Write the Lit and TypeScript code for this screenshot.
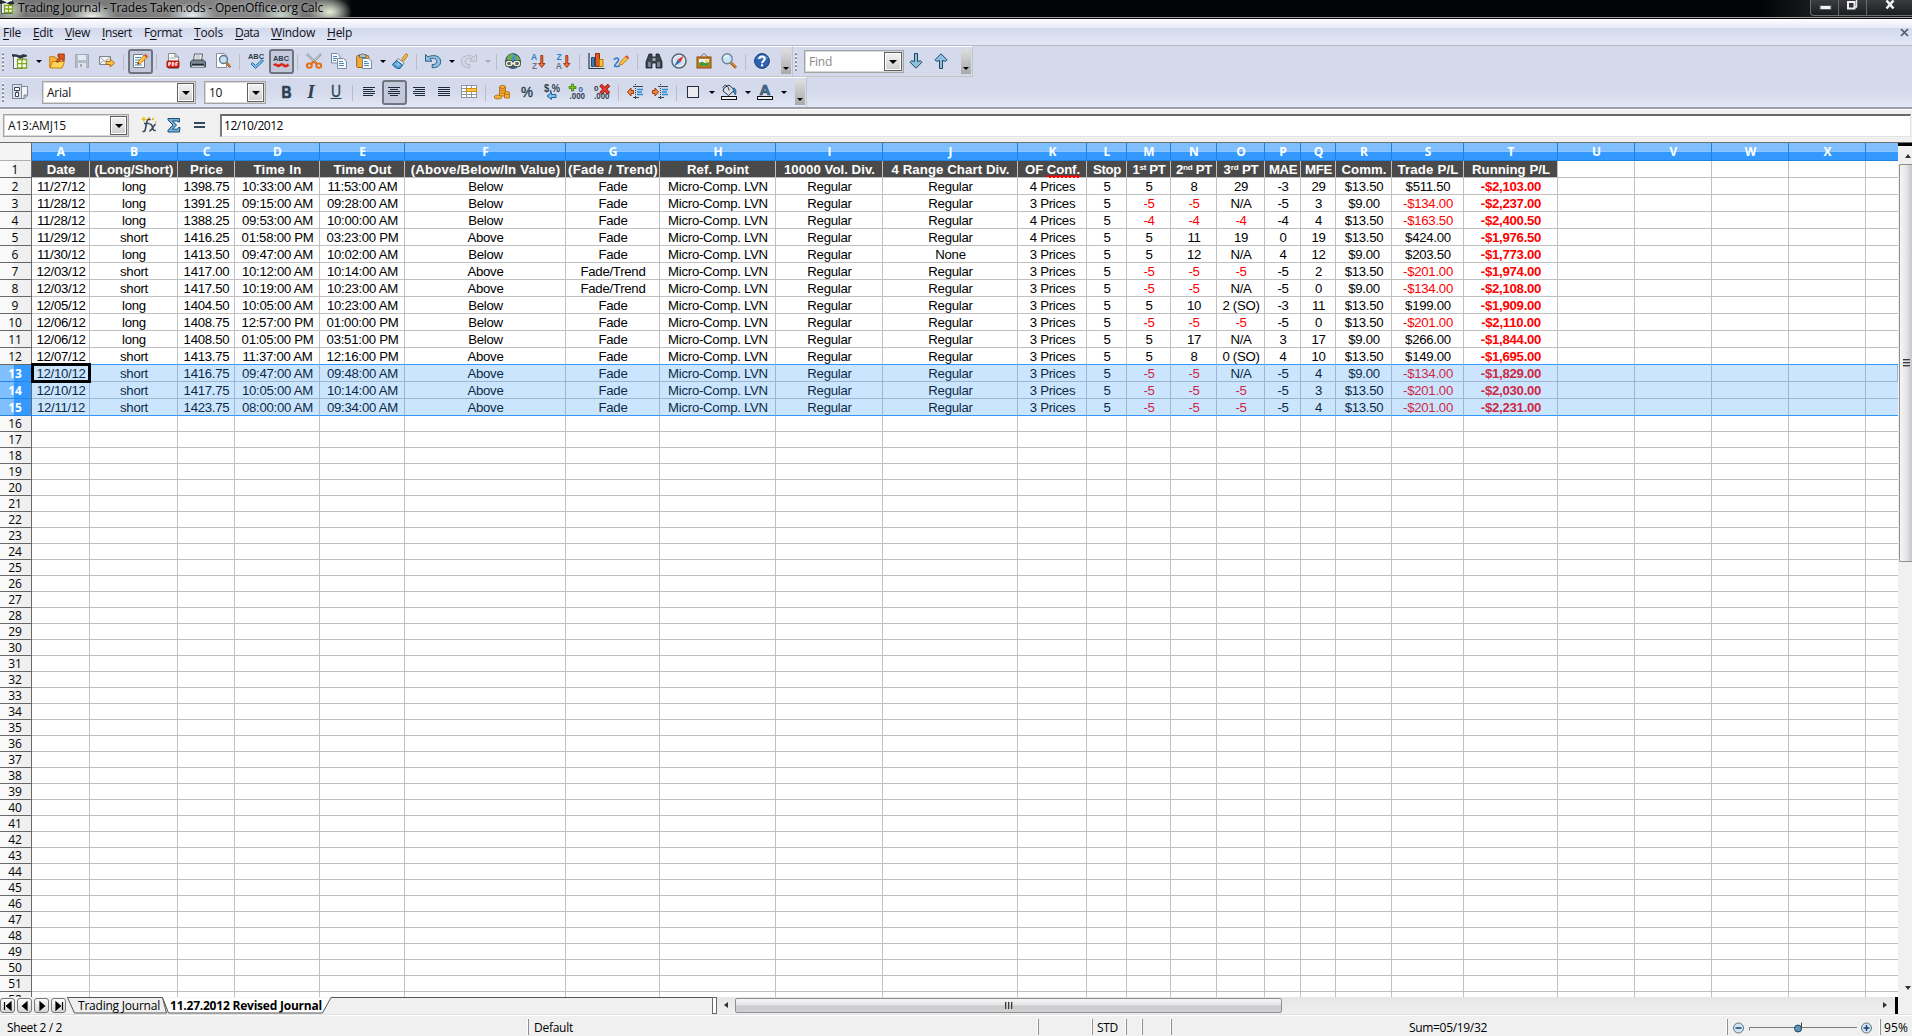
import { LitElement, html, css, svg, nothing } from "lit";
import { customElement, property } from "lit/decorators.js";

/* Stretches or tightens its text to a given width through letter spacing. */
@customElement("fit-text")
class FitText extends LitElement {
  @property({ type: Number }) w = 0;
  static styles = css`
    :host { display: inline-block; white-space: pre; }
  `;
  firstUpdated() {
    const n = (this.textContent ?? "").length;
    const nat = this.getBoundingClientRect().width;
    if (n && this.w) this.style.letterSpacing = ((this.w - nat) / n).toFixed(3) + "px";
  }
  render() {
    return html`<slot></slot>`;
  }
}

const NAVY = "#33495c";
const lines = (rows: number[][]) =>
  rows.map(([x, y, w]) => svg`<rect x=${x} y=${y} width=${w} height="1" fill="#1d2b36"/>`);

const ICONS: Record<string, unknown> = {
  new: svg`<path d="M1.500 2.500h9v13h-9z" fill="#f4f6f2" stroke="#5c6b78"/><path d="M0 1l5 .5 3 1.500 3-2 4 1v1.500l-4 1-3 1.500-3-2-5-.5z" fill="#2c3a46"/><path d="M5.500 6.500h9v8.500h-9z" fill="#fff" stroke="#7fa818" stroke-width="1.300"/><path d="M5.500 10.700h9M10 6.500v8.500" stroke="#7fa818" stroke-width="1.300"/>`,
  open: svg`<path d="M.7 14.500V3.700h5l1 1.500h3v9z" fill="#f5b63a" stroke="#c47d08"/><path d="M1 15l2.500-6.500h12L13 15z" fill="#ffd35c" stroke="#c98208"/><path d="M7 8.500l4-4.500-2-.2V1h6.300v6.300h-2.300V5.500L9 9.500z" fill="#e0561c" stroke="#8e2b06" stroke-width=".8"/>`,
  save: svg`<path d="M1.500 1.500h13v13h-13z" fill="#b4bcc8" stroke="#a3aab7"/><path d="M4 2h8v5H4z" fill="#e4e8f0"/><path d="M4 10h8v5H4z" fill="#dde1ea"/><path d="M6 11h2v3H6z" fill="#a3aab7"/>`,
  mail: svg`<path d="M.5 3.500h11v8H.5z" fill="#f3f4f6" stroke="#7f8790"/><path d="M.5 3.500l5.500 5 5.500-5M.5 11.500l4-4.300M11.500 11.500l-4-4.300" fill="none" stroke="#8b939c" stroke-width=".8"/><path d="M7 8.500h4.200V6l4.300 4-4.300 4v-2.500H7z" fill="#ffc24a" stroke="#b5650b"/>`,
  edit: svg`<path d="M1.500 1.500h9l2 2v11h-11z" fill="#fff" stroke="#6d7b86"/><path d="M3 4.500h6M3 7h5M3 9.500h3M3 12h7" stroke="#3d88c4"/><path d="M5.500 11.500l1-3.300L13 1.500l2.400 2.300-6.700 6.700z" fill="#ffc637" stroke="#b46c12" stroke-width=".8"/><path d="M12 2.500l1.500-1.500L16 3.300 14.500 5z" fill="#e3483a"/><path d="M5.500 11.500l.6-2 1.300 1.300z" fill="#222"/>`,
  pdf: svg`<path d="M3.500.5h7L13.500 4v11.500h-10z" fill="#f7f7f7" stroke="#858d94"/><path d="M10 .5V4h3.500" fill="#ccc" stroke="#858d94"/><path d="M5 5h5" stroke="#aaa"/><rect x="2" y="8" width="12" height="6.500" rx=".8" fill="#dc2a1f" stroke="#a01009"/><path d="M3.800 13V9.500h1.500v1.700H3.800M7.300 9.500v3.200h.8l.8-.8V10l-.8-.5zM10.900 13V9.500h2M10.900 11.200h1.500" fill="none" stroke="#fff"/>`,
  print: svg`<path d="M3.500 7.500l1-6.500h8l-1 6.500z" fill="#fff" stroke="#555f69"/><path d="M5.500 3h5M5.300 5h5" stroke="#9aa"/><path d="M.5 9l2-2h11l2 2v5H.5z" fill="#7b8893" stroke="#34404a"/><path d="M2 11.500h12" stroke="#202a33" stroke-width="1.500"/><path d="M2 13.500h12" stroke="#cfd6db"/>`,
  preview: svg`<path d="M1.500.5h8l2 2v12h-10z" fill="#fdfdfd" stroke="#89919a"/><circle cx="8.500" cy="6.500" r="4" fill="#c3e0f5" stroke="#577083" stroke-width="1.300"/><path d="M11.500 9.800l3.800 4.500" stroke="#9d5510" stroke-width="2.400"/><path d="M11.500 9.800l3.500 4" stroke="#e59c4a"/>`,
  cut: svg`<path d="M1 1l9.500 9.500M15 1L5.500 10.500" stroke="#8a949d" stroke-width="2.400"/><path d="M1.500 1.300l8.500 8.800M14.500 1.300L6 9.800" stroke="#eef1f3" stroke-width=".8"/><g fill="none" stroke="#e2711a" stroke-width="2"><ellipse cx="3.300" cy="12.600" rx="2.500" ry="2.200"/><ellipse cx="12.700" cy="12.600" rx="2.500" ry="2.200"/><path d="M5 11l3-2.500 3 2.500"/></g>`,
  copy: svg`<g fill="#f6f9fb" stroke="#7a8b99"><path d="M.5.5h6l2.500 2.500v7H.5z"/><path d="M6.500 5.500h6L15.500 8v7.500h-9z"/></g><path d="M2 3.500h4M2 5.500h4M2 7.500h3M8 8.500h4M8 10.500h5M8 12.500h5" stroke="#4e8cb8"/>`,
  paste: svg`<rect x=".7" y="2.500" width="12" height="12" rx="1" fill="#eea93b" stroke="#a5650d"/><path d="M3.500 1.500h2l1-1.200 1 1.200h2.500v3H3.500z" fill="#b6bec6" stroke="#56616b" stroke-width=".8"/><path d="M6.500 5.500h6l3 2.500v7.500h-9z" fill="#f8fafc" stroke="#788a98"/><path d="M8 8.500h3.500M8 10.500h5M8 12.500h5" stroke="#4e8cb8"/>`,
  brush: svg`<path d="M9.500 6.500l4.500-6 2 1.700-4.500 6z" fill="#f7b93c" stroke="#a76a0d" stroke-width=".8"/><path d="M6 5.500l6 4.500-1.500 2.500L4 8z" fill="#e8eef2" stroke="#5c7485" stroke-width=".8"/><path d="M4.500 7.500l6 4.500-2.500 3.500c-3 .5-6-1.500-7.700-4z" fill="#4f9bd8" stroke="#1f5e94"/><path d="M3.500 10.500l3 2.500M5.500 9.500l2.500 3" stroke="#c8e4f8"/>`,
  undo: svg`<path d="M.5 1.500v6.700h6.500L4.800 6C8 4.600 11.800 5.500 11.800 8.600c0 2-1.600 3-4.600 3v3.200c5.500 0 8.500-2.500 8.500-6.300C15.700 3 8.600 1 2.900 4z" fill="#8fc1e6" stroke="#2c5c83"/>`,
  redo: svg`<g transform="matrix(-1 0 0 1 16 0)"><path d="M.5 1.500v6.700h6.500L4.800 6C8 4.600 11.800 5.500 11.800 8.600c0 2-1.600 3-4.600 3v3.200c5.500 0 8.500-2.500 8.500-6.300C15.700 3 8.600 1 2.900 4z" fill="#d2d7e3" stroke="#b0b6c5"/></g>`,
  link: svg`<circle cx="8" cy="8" r="7.300" fill="#4a8fc9" stroke="#27465f"/><path d="M2 5c1-2.500 3-4 6-4l1 2-3 2 1 2-4 1zM10 4l3-1 2 4-3 1z" fill="#74b13e"/><path d="M2 8h12v5l-3 2.500H5L2 13z" fill="#33454f" opacity=".45"/><g fill="none" stroke="#2e3b33" stroke-width="3"><rect x="1.500" y="8.500" width="5.500" height="4" rx="2"/><rect x="9" y="8.500" width="5.500" height="4" rx="2"/></g><g fill="none" stroke="#eef0d4" stroke-width="1.500"><rect x="1.500" y="8.500" width="5.500" height="4" rx="2"/><rect x="9" y="8.500" width="5.500" height="4" rx="2"/><path d="M5.500 10.500h5"/></g>`,
  chart: svg`<path d="M1 0v15.500h15.500" fill="none" stroke="#2a3a48" stroke-width="1.200"/><path d="M3.500 4.500h3v9h-3z" fill="#3a7fb8" stroke="#1b4d78"/><path d="M7.500.5h4v13h-4z" fill="#e25a1c" stroke="#8c2f08"/><path d="M11.500 6.500h3.500v7h-3.500z" fill="#fbc23a" stroke="#b17a0a"/>`,
  draw: svg`<path d="M1 7c1-3 5-2.500 4.500 0S1 12 1.500 13s3 .5 5 0" fill="none" stroke="#2f7ac8" stroke-width="1.600"/><path d="M6 12.500l1.300-3.300L13 3l2.300 2.200-5.800 6z" fill="#ffc637" stroke="#a96510" stroke-width=".8"/><path d="M12.300 3.700l1.500-1.500 2.200 2.300L14.600 6z" fill="#e3483a"/>`,
  find: svg`<path d="M3 1h3v3h4V1h3l3 8v6h-6v-5H6v5H0V9z" fill="#3a454f" stroke="#161d24" stroke-width=".8"/><path d="M2 9h3v5H2zM11 9h3v5h-3z" fill="#77848f"/><path d="M6.500 5h3v3h-3z" fill="#9aa6b0"/>`,
  compass: svg`<circle cx="8" cy="8" r="7" fill="#eaf2f9" stroke="#5b6a77" stroke-width="1.600"/><circle cx="8" cy="8" r="5" fill="#cfe2f2"/><path d="M13 2.500L9.300 9.300 6.700 6.700z" fill="#e32a1c"/><path d="M3 13.500l3.700-6.800 2.600 2.600z" fill="#2a6db8"/>`,
  gallery: svg`<path d="M4 4l4-3.500L12 4" fill="none" stroke="#777"/><rect x="1" y="4" width="14" height="11" fill="#ce7c24" stroke="#8a4808"/><rect x="3" y="6" width="10" height="7" fill="#e9f5fc"/><path d="M3 13v-3l3-1.500 3 1.500 4-1v4z" fill="#4d9a34"/><circle cx="10.500" cy="8" r="1.300" fill="#ffd023"/>`,
  zoom: svg`<circle cx="6.200" cy="5.800" r="5" fill="#cbe5f8" stroke="#6d8597" stroke-width="1.400"/><path d="M3.500 5c.5-2 2.500-2.500 3.500-2" stroke="#fff" stroke-width="1.200" fill="none"/><path d="M10 9.800l5 5" stroke="#a2570c" stroke-width="2.800"/><path d="M10.200 9.600l4.600 4.600" stroke="#f4b362"/>`,
  help: svg`<circle cx="8" cy="8" r="7.400" fill="#2d62b0" stroke="#173d78"/><path d="M2 6c1-4 10-6 12.500-.5-3 1.500-9 .5-12.500.500z" fill="#6a98d8" opacity=".6"/><path d="M5.300 6c0-3.400 5.400-3.400 5.400 0 0 2-2.700 2.200-2.700 4.200" fill="none" stroke="#fff" stroke-width="2"/><rect x="7" y="11.300" width="2.100" height="2.100" fill="#fff"/>`,
  down: svg`<path d="M6.500.5h3v8l3-.8 1.500 1.500-6 6-6-6 1.500-1.500 3 .8z" fill="#8fc0e2" stroke="#1f4460"/>`,
  up: svg`<path d="M6.500 15.500h3v-8l3 .8L14 6.800l-6-6-6 6 1.500 1.500 3-.8z" fill="#8fc0e2" stroke="#1f4460"/>`,
  styles: svg`<path d="M5.500 2.500h10v9l-3 3h-7" fill="#f3f4f7" stroke="#7d8894"/><path d="M15.500 11h-3.500v3.500" fill="#b9c1ca" stroke="#7d8894"/><rect x=".5" y=".5" width="9" height="14" fill="#dde1ea" stroke="#7d8894"/><path d="M2.500 3.500h5v3h-5zM5 6.500v2M3.500 8.500h3v4h-3z" fill="#fff" stroke="#33495c"/>`,
  left: svg`${lines([[2, 3, 12], [2, 5, 10], [2, 7, 12], [2, 9, 12], [2, 11, 10]])}`,
  center: svg`${lines([[2, 3, 12], [4, 5, 8], [2, 7, 12], [2, 9, 12], [4, 11, 8]])}`,
  right: svg`${lines([[2, 3, 12], [4, 5, 10], [2, 7, 12], [2, 9, 12], [4, 11, 10]])}`,
  justify: svg`${lines([[2, 3, 12], [2, 5, 12], [2, 7, 12], [2, 9, 12], [2, 11, 12]])}`,
  merge: svg`<rect x=".5" y="1.500" width="15" height="12" fill="#fff" stroke="#8c97a2"/><path d="M.5 4.500h15M.5 7.500h15M.5 10.500h15M5.500 1.500v12M10.500 1.500v12" stroke="#8c97a2"/><rect x="5.500" y="4.500" width="10" height="3" fill="#ffc94f" stroke="#d18a0a"/>`,
  coins: svg`<g fill="#f4b13c" stroke="#aa640a" stroke-width=".8"><ellipse cx="8.500" cy="3" rx="3" ry="1.700"/><path d="M5.500 3v9h6V3c-1 2-5 2-6 0z"/><path d="M10.500 9.500h5v4.500h-5z"/><ellipse cx="13" cy="9" rx="2.600" ry="1.500"/><ellipse cx="4" cy="13" rx="3.800" ry="2"/></g><path d="M6 6c1 1 4 1 5 0M6 8.500c1 1 4 1 5 0" stroke="#aa640a" fill="none" stroke-width=".8"/>`,
  dec: svg`<path d="M6.500 6.500H4V4L.5 8 4 12V9.500h2.500z" fill="#f08a4a" stroke="#9b3a0b"/><path d="M8.500 0v16" stroke="#333" stroke-dasharray="1 1"/><path d="M6 2.500h10M6 13.500h6" stroke="#33495c"/><path d="M10 5.500h6M10 8h5M10 10.500h6" stroke="#2d8bd0" stroke-width="1.400"/>`,
  inc: svg`<path d="M.5 6.500H3V4l3.500 4L3 12V9.500H.5z" fill="#f08a4a" stroke="#9b3a0b"/><path d="M8.500 0v16" stroke="#333" stroke-dasharray="1 1"/><path d="M6 2.500h10M6 13.500h6" stroke="#33495c"/><path d="M10 5.500h6M10 8h5M10 10.500h6" stroke="#2d8bd0" stroke-width="1.400"/>`,
  border: svg`<rect x="2.500" y="2.500" width="11" height="11" fill="#e9ebee" stroke="#222e38"/>`,
  bucket: svg`<path d="M3 4l5-3 5.500 5-6 5.500L2 7z" fill="#d7dee4" stroke="#27343f"/><path d="M1.500 3.500c3-4 6-2 6.500 3" fill="none" stroke="#27343f"/><path d="M12 4c3 0 3.500 3 2.500 7l-2-3z" fill="#3f86bd" stroke="#1d4c72" stroke-width=".7"/><rect x=".5" y="12.500" width="15" height="3" fill="#f2f2f2" stroke="#111"/>`,
  sum: svg`<path d="M2 1.500h11.500v3.500h-1.500L11.500 4H6.500l4 4-4 4.200h5.200l.7-1.700h1.600l-.6 4.500H2v-1.800L7 8 2 3z" fill="#6eb1dc" stroke="#1c4e72"/>`,
  fx: svg`<path d="M9.500 2.800c-2-1.500-3.300 0-3.700 2L4.300 12.500c-.4 2-1.300 2.500-2.800 1.700M3 6.500h5.500" fill="none" stroke="${NAVY}" stroke-width="1.600"/><path d="M8.500 7.500c2-.8 2.500 1 3 3s1.200 3.700 3.200 2.800M14.800 7.300c-2.300 0-3.600 6.700-6.500 6.700" fill="none" stroke="${NAVY}" stroke-width="1.500"/><g fill="#f3b928"><path d="M2 0h1.500v1.500H5V3H3.500v1.500H2V3H.5V1.500H2z"/><path d="M7 0h2v1.500H7zM11 1h2v2h-2zM14 4h1.500v1.500H14zM5 2h1.500v1.500H5z"/></g>`,
  equal: svg`<path d="M3 6h11M3 10h11" stroke="${NAVY}" stroke-width="2"/>`,
};

/* Icons that carry real letters. */
const TEXT_ICONS: Record<string, unknown> = {
  spell: svg`<text x="8" y="5.500" class="s" text-anchor="middle" font-size="8" font-weight="700" textLength="16" lengthAdjust="spacingAndGlyphs" fill="#2b3d4c">ABC</text><path d="M4.500 9.500l3 3L14 6.500l1.500 1.500-8 7.500L3 11z" fill="#7cc0ee" stroke="#1c64a0" stroke-width=".9"/>`,
  auto: svg`<text x="8" y="8" class="s" text-anchor="middle" font-size="8" font-weight="700" textLength="16" lengthAdjust="spacingAndGlyphs" fill="#2b3d4c">ABC</text><path d="M1 12.500c2-3 3.500 2 5.500 0s3-1.500 4.500 0 3 .5 4.500-1" fill="none" stroke="#d8281c" stroke-width="2.600"/>`,
  az: svg`<text x="1" y="6.500" class="s" font-size="8.500" font-weight="700" fill="#2484cc">A</text><text x="2" y="15.500" class="s" font-size="8.500" font-weight="700" fill="#6b7680">Z</text><path d="M10.800 2.500h2v8h2.200l-3.200 4-3.200-4h2.200z" fill="#f0713a" stroke="#9c2b08" stroke-width=".9"/>`,
  za: svg`<text x="1.500" y="6.500" class="s" font-size="8.500" font-weight="700" fill="#2484cc">Z</text><text x=".7" y="15.500" class="s" font-size="8.500" font-weight="700" fill="#6b7680">A</text><path d="M10.800 2.500h2v8h2.200l-3.200 4-3.200-4h2.200z" fill="#f0713a" stroke="#9c2b08" stroke-width=".9"/>`,
  bold: svg`<text x="8.500" y="14" class="s" text-anchor="middle" font-size="17" font-weight="700" stroke="#2b4154" stroke-width=".7" textLength="10" lengthAdjust="spacingAndGlyphs" fill="#2b4154">B</text>`,
  italic: svg`<text x="8" y="14" text-anchor="middle" font-family="Liberation Serif, serif" font-style="italic" font-weight="700" font-size="19" fill="#2b4154">I</text>`,
  under: svg`<text x="8" y="12.500" class="s" text-anchor="middle" font-size="16" textLength="10" lengthAdjust="spacingAndGlyphs" stroke="#2b4154" stroke-width=".3" fill="#2b4154">U</text><path d="M2.500 14.500h11" stroke="#2b4154"/>`,
  pct: svg`<text x="8" y="13" class="s" text-anchor="middle" font-size="14" stroke="#2b3d4c" stroke-width=".4" textLength="12" lengthAdjust="spacingAndGlyphs" fill="#2b3d4c">%</text>`,
  std: svg`<text x="0" y="8" class="s" font-size="10" font-weight="700" fill="#2b3d4c" textLength="16" lengthAdjust="spacingAndGlyphs">$,%</text><path d="M12 10.500H7.500V8.500L3 12l4.500 3.500v-2H12z" fill="#7cc0ee" stroke="#1c64a0"/>`,
  add: svg`<path d="M2.500 0h2v2.500H7v2H4.500V7h-2V4.500H0v-2h2.500z" fill="#7cc41e" stroke="#3b7d06" stroke-width=".8"/><text x="9.500" y="7.500" class="s" font-size="8" font-weight="700" fill="#2b62b4">0</text><text x="0.500" y="15" class="s" font-size="8.500" font-weight="700" fill="#2b3d4c" textLength="15.500" lengthAdjust="spacingAndGlyphs">.000</text>`,
  del: svg`<text x="0" y="7" class="s" font-size="8" font-weight="700" fill="#2b3d4c">0</text><text x="0" y="15" class="s" font-size="8.500" font-weight="700" fill="#2b3d4c" textLength="15.500" lengthAdjust="spacingAndGlyphs">.000</text><path d="M6.500 1l8.500 8.500M15 1L6.500 9.500" stroke="#7d0b05" stroke-width="3.400"/><path d="M6.800 1.300l7.900 7.900M14.700 1.300L6.800 9.200" stroke="#f03a2c" stroke-width="2"/>`,
  fontcolor: svg`<text x="8" y="11" class="s" text-anchor="middle" font-size="15" font-weight="700" fill="#4b7ea6" stroke="#22394c" stroke-width=".7">A</text><rect x=".5" y="12.500" width="15" height="3" fill="#f2f2f2" stroke="#111"/>`,
};

const glyph = (n: string) =>
  html`<svg class="ico" width="16" height="16" viewBox="0 0 16 16">${ICONS[n] ?? TEXT_ICONS[n]}</svg>`;

const tool = (t: string) => {
  if (t === "|") return html`<i class="sep"></i>`;
  if (t === "v") return html`<i class="drop"></i>`;
  if (t === "x") return html`<i class="drop off"></i>`;
  const pressed = t.startsWith("!");
  return html`<span class="tool ${pressed ? "pressed" : ""}">${glyph(pressed ? t.slice(1) : t)}</span>`;
};

const split = (s: string) => s.split(" ");
const BAR1 = split("new v open save mail | !edit | pdf print preview | spell !auto | cut copy paste v brush | undo v redo x | link az za | chart draw | find compass gallery zoom | help");
const BAR2 = split("bold italic under | left !center right justify merge | coins pct std add del | dec inc | border v bucket v fontcolor v");

const MENUS: [string, string, string, number][] = [
  ["", "F", "ile", 18], ["", "E", "dit", 20], ["", "V", "iew", 25], ["", "I", "nsert", 30], ["F", "o", "rmat", 38],
  ["", "T", "ools", 29], ["", "D", "ata", 24], ["", "W", "indow", 44], ["", "H", "elp", 25],
];

const HEADS: unknown[] = [
  "Date", "(Long/Short)", "Price", "Time In", "Time Out", "(Above/Below/In Value)", "(Fade / Trend)", "Ref. Point",
  "10000 Vol. Div.", "4 Range Chart Div.", html`OF <u class="wavy">Conf.</u>`, "Stop",
  html`1<sup>st</sup> PT`, html`2<sup>nd</sup> PT`, html`3<sup>rd</sup> PT`, "MAE", "MFE", "Comm.", "Trade P/L", "Running P/L",
];
const HEAD_W = [28.7, 79, 33, 48, 58, 149.5, 90, 62, 91, 118, 55, 28, 33, 36, 35, 28, 27, 45, 61, 78];

const DATA = `11/27/12,long,1398.75,10:33:00 AM,11:53:00 AM,Below,Fade,Regular,4,5,8,29,-3,29,$13.50,$511.50,2103.00
11/28/12,long,1391.25,09:15:00 AM,09:28:00 AM,Below,Fade,Regular,3,-5,-5,N/A,-5,3,$9.00,-$134.00,2237.00
11/28/12,long,1388.25,09:53:00 AM,10:00:00 AM,Below,Fade,Regular,4,-4,-4,-4,-4,4,$13.50,-$163.50,2400.50
11/29/12,short,1416.25,01:58:00 PM,03:23:00 PM,Above,Fade,Regular,4,5,11,19,0,19,$13.50,$424.00,1976.50
11/30/12,long,1413.50,09:47:00 AM,10:02:00 AM,Below,Fade,None,3,5,12,N/A,4,12,$9.00,$203.50,1773.00
12/03/12,short,1417.00,10:12:00 AM,10:14:00 AM,Above,Fade/Trend,Regular,3,-5,-5,-5,-5,2,$13.50,-$201.00,1974.00
12/03/12,short,1417.50,10:19:00 AM,10:23:00 AM,Above,Fade/Trend,Regular,3,-5,-5,N/A,-5,0,$9.00,-$134.00,2108.00
12/05/12,long,1404.50,10:05:00 AM,10:23:00 AM,Below,Fade,Regular,3,5,10,2 (SO),-3,11,$13.50,$199.00,1909.00
12/06/12,long,1408.75,12:57:00 PM,01:00:00 PM,Below,Fade,Regular,3,-5,-5,-5,-5,0,$13.50,-$201.00,2110.00
12/06/12,long,1408.50,01:05:00 PM,03:51:00 PM,Below,Fade,Regular,3,5,17,N/A,3,17,$9.00,$266.00,1844.00
12/07/12,short,1413.75,11:37:00 AM,12:16:00 PM,Above,Fade,Regular,3,5,8,0 (SO),4,10,$13.50,$149.00,1695.00
12/10/12,short,1416.75,09:47:00 AM,09:48:00 AM,Above,Fade,Regular,3,-5,-5,N/A,-5,4,$9.00,-$134.00,1829.00
12/10/12,short,1417.75,10:05:00 AM,10:14:00 AM,Above,Fade,Regular,3,-5,-5,-5,-5,3,$13.50,-$201.00,2030.00
12/11/12,short,1423.75,08:00:00 AM,09:34:00 AM,Above,Fade,Regular,3,-5,-5,-5,-5,4,$13.50,-$201.00,2231.00`
  .split("\n")
  .map((l) => {
    const c = l.split(",");
    const total = "-$" + c[16].replace(/^(\d)/, "$1,");
    return [...c.slice(0, 7), "Micro-Comp. LVN", "Regular", c[7], c[8] + " Prices", "5", ...c.slice(9, 16), total];
  });

const COLS = 25;
const letters = Array.from({ length: COLS }, (_, i) => (i < 24 ? String.fromCharCode(65 + i) : ""));
const isLoss = (v: string, c: number) => v.startsWith("-") && c !== 15;

@customElement("app-root")
class AppRoot extends LitElement {
  static styles = css`
    :host {
      display: flex; flex-direction: column; width: 1912px; height: 1036px; overflow: hidden;
      background: #f0f0f0; color: #000; font: 12px/16px "Open Sans", "Noto Sans", sans-serif;
    }
    * { box-sizing: border-box; }
    i { font-style: normal; }
    .s { font-family: "Liberation Sans", sans-serif; }
    fit-text { flex: none; }

    .title {
      height: 19px; flex: none; display: flex; align-items: flex-start; border-bottom: 1px solid #0a0a0a;
      box-shadow: inset 0 -1px #a0a0a0; color: #000; overflow: hidden;
      background:
        radial-gradient(ellipse 24px 14px at 92px 17px, #f0f4ec 0, #f0f4ec00 100%),
        radial-gradient(ellipse 24px 12px at 192px 15px, #e4eef4 0, #e4eef400 100%),
        radial-gradient(ellipse 22px 12px at 281px 15px, #c8d6ca 0, #c8d6ca00 100%),
        radial-gradient(ellipse 22px 14px at 330px 12px, #e6efd9 0, #dfe9cf00 100%),
        radial-gradient(ellipse 16px 14px at 10px 10px, #c5cfc0 0, #c5cfc000 100%),
        linear-gradient(90deg, #707070 0, #868686 250px, #6a6a6a 322px, #020306 352px, #020306 1760px, #1a1b1d 1815px, #121316 100%);
    }
    .logo { width: 15px; height: 16px; margin: -1px 3px 0 0; flex: none; }
    .caption { line-height: 16px; text-shadow: 0 0 4px #c8c8c8; }
    .winbtns {
      margin-left: auto; width: 102px; height: 16px; display: flex; border: 1px solid #6a6c6f; border-top: 0; border-right: 0;
      border-radius: 0 0 0 4px; background: linear-gradient(#3b3d40, #1b1c1f);
    }
    .winbtns span { display: flex; justify-content: center; border-right: 1px solid #66686b; width: 28px; height: 15px; }
    .winbtns span.wide { flex: 1; border: 0; }

    .menu {
      height: 27px; flex: none; display: flex; align-items: flex-start; gap: 12px; padding: 5.500px 3px 0; color: #101018;
      background: linear-gradient(#fff 0, #e6eaf5 9px, #d3d9ec 9px, #e2e7f5 100%); border-bottom: 1px solid #b4b8ca;
    }
    .menu b { font-weight: 400; text-decoration: underline; text-underline-offset: 2px; }
    .menu svg { margin: 3.500px 0 0 auto; }

    .bars {
      height: 63px; flex: none; border-bottom: 2px solid #9c9ea9;
      background: linear-gradient(#d4daec 0, #d4daec 46px, #e2e7f5 61px);
    }
    .row1, .row2 { display: flex; align-items: stretch; }
    .row1 { height: 31px; }
    .row2 { height: 30px; }
    .bar { display: flex; align-items: center; border-right: 1px solid #c3c5c6; border-top: 1px solid #fff; }
    .row1 .bar { border-bottom: 1px solid #c3c5c6; }
    .row1 .bar.main { width: 793px; }
    .row1 .bar.search { width: 180px; }
    .row2 .bar { width: 807px; }
    .grip { width: 2px; height: 19px; margin: 0 4px 0 2px; background: repeating-linear-gradient(#fff 0 1px, #8d93a3 1px 3px, transparent 3px 4px); flex: none; }
    .tool { width: 25px; height: 25px; flex: none; display: flex; align-items: center; justify-content: center; padding: 0 1px 1px 0; }
    .pressed { border: 2px solid #70747f; border-radius: 3px; background: #c3c9da; }
    .ico { display: block; flex: none; overflow: visible; }
    .sep { width: 8px; height: 16px; flex: none; background: linear-gradient(#b9bdc8, #b9bdc8) 3px 0 / 1px 100% no-repeat; }
    .drop { width: 11px; height: 25px; flex: none; display: flex; align-items: center; justify-content: center; }
    .drop::before { content: ""; border: 3px solid transparent; border-top-color: #000; border-bottom: 0; }
    .drop.off::before { border-top-color: #a4a8b4; }
    .bar .drop.first { width: 12px; }
    .more { width: 10px; height: 25px; margin-left: auto; margin-right: 1px; display: flex; align-items: flex-end; justify-content: center; padding-bottom: 4px; background: linear-gradient(#dedede, #a9a9a9); flex: none; }
    .more::before { content: ""; border: 3px solid transparent; border-top-color: #000; border-bottom: 0; }
    .combo { height: 23px; flex: none; display: flex; align-items: center; background: #fff; border: 1px solid #a4a4a4; box-shadow: inset 0 0 0 1px #d8d8d8; padding: 0 1px 0 4px; color: #111; }
    .combo .btn { margin-left: auto; width: 17px; height: 19px; border: 1px solid #606060; outline: 1px solid #fff; outline-offset: -2px; background: linear-gradient(#f4f4f4, #cfcfcf); display: flex; align-items: center; justify-content: center; flex: none; }
    .combo .btn::before { content: ""; border: 4px solid transparent; border-top-color: #000; border-bottom: 0; }
    .font { width: 154px; margin-left: 9px; }
    .size { width: 62px; margin: 0 8px 0 8px; }
    .find { width: 100px; margin-left: 3px; color: #8a8a8a; }
    .find .btn { width: 18px; }

    .formula { height: 33px; flex: none; display: flex; align-items: flex-start; padding: 4px 1px 0 3px; border-top: 1px solid #fff; background: #f0f0f0; }
    .formula .tool { margin-top: -1px; }
    .name { width: 126px; margin-right: 8px; }
    .input { flex: 1; margin-left: 8px; height: 23px; background: #fff; border: 1px solid #e2e2e2; border-top: 2px solid #686868; border-left: 2px solid #7a7a7a; padding: 0 2px 1px; display: flex; align-items: center; }

    .work { height: 855px; flex: none; display: flex; border-top: 1px solid #6e6e6e; }
    .sheet { width: 1898px; height: 854px; overflow: hidden; background: #fff; }
    .r {
      display: grid; position: relative; height: 17px; grid-template-rows: 100%;
      grid-template-columns: 32px 58px 88px 57px 85px 85px 161px 94px 116px 107px 135px 69px 40px 44px 46px 48px 36px 35px 56px 72px 94px 77px 77px 77px 77px 32px;
    }
    .r.small { height: 16px; }
    .r > * { border-right: 1px solid #c0c0c0; border-bottom: 1px solid #c0c0c0; text-align: center; white-space: nowrap; min-width: 0; }
    .r > *:last-child { border-right: 0; }
    .c { font: 13.200px/18px "Liberation Sans", Arial, sans-serif; letter-spacing: -.27px; padding-left: 1px; height: 100%; }
    .c.head { background: #4a4a4a; color: #fff; font-weight: 700; display: flex; justify-content: center; letter-spacing: 0; }
    .c.loss { color: #f00; }
    .c.total { color: #f00; font-weight: 700; }
    sup { font-size: 8px; line-height: 0; vertical-align: 4.500px; }
    .wavy {
      text-decoration: none; padding-bottom: 1px;
      background:
        linear-gradient(45deg, transparent 38%, #f00 38% 62%, transparent 62%) 0 100% / 4px 3px repeat-x,
        linear-gradient(-45deg, transparent 38%, #f00 38% 62%, transparent 62%) 2px 100% / 4px 3px repeat-x;
    }
    .r > .n { background: linear-gradient(90deg, #f9f9f9 0 14px, #f0f0f0 14px); border-color: #686868; padding-right: 1px; line-height: 17px; }
    .small > .n { line-height: 16px; }
    .r.top { height: 18px; }
    .r.top > .l { background: linear-gradient(#80bfff 0 8px, #8cc5ff 8px 9px, #3399ff 9px); color: #fff; font-weight: 700; border-color: #1f80e2; line-height: 17px; padding-left: 1px; }
    .r.top > .n { background: #f4f4f4; border-bottom-color: #b0b0b0; }
    .r.sel::after { content: ""; position: absolute; inset: 0 0 0 32px; background: rgba(51, 153, 255, .25); }
    .r.edge > .c { border-bottom-color: #3399ff; }
    .r.sel > .n { background: linear-gradient(90deg, #80bfff 0 14px, #3399ff 14px); color: #fff; font-weight: 700; border-bottom-color: #2585e6; }
    .cursor { position: absolute; z-index: 1; left: 31px; top: -2px; width: 60px; height: 20px; border: 3px solid #000 !important; }

    .vbar { width: 14px; background: #f0f0f0; display: flex; flex-direction: column; align-items: flex-end; border-top: 3px solid #000; overflow: hidden; }
    .vthumb { width: 13px; height: 398px; margin-top: 18px; border: 1px solid #8e8e8e; border-right: 0; border-radius: 2px 0 0 2px; background: linear-gradient(90deg, #f6f6f6 0, #e6e6e8 6px, #c6c7cb 100%); display: flex; align-items: center; justify-content: flex-end; padding-right: 2px; flex: none; }
    .arr { position: relative; width: 0; height: 0; border: 3.500px solid transparent; }
    .arr.u { border-bottom: 4px solid #303030; border-top: 0; margin: 8px 1px -12px 0; }
    .arr.d { border-top: 4px solid #303030; border-bottom: 0; margin: auto 1px 7px 0; }
    .arr.lf { border-right: 4px solid #303030; border-left: 0; }
    .arr.rt { border-left: 4px solid #303030; border-right: 0; }
    .gripv { width: 7px; height: 8px; background: repeating-linear-gradient(#3a3a3a 0 1px, #aaa 1px 2px, transparent 2px 3px); }

    .foot { height: 18px; flex: none; display: flex; align-items: flex-start; border-bottom: 1px solid #e0e0e0; }
    .nav { display: flex; gap: 2px; width: 67px; padding-top: 1px; flex: none; }
    .nav span { width: 15px; height: 15px; border: 1px solid #777; border-radius: 3px; background: linear-gradient(#fdfdfd, #d6d6d6); display: flex; align-items: center; justify-content: center; }
    .tabs { position: relative; width: 645px; height: 17px; flex: none; }
    .tabs svg { position: absolute; left: 0; top: 0; }
    .tabs .names { position: relative; display: flex; padding-left: 11px; line-height: 18px; }
    .tabs .names b { margin-left: 10px; }
    .splitter { width: 5px; height: 17px; border: 1px solid #696969; background: #fff; flex: none; }
    .hbar { flex: 1; height: 16px; display: flex; align-items: center; background: linear-gradient(#e6e6e6, #efefef); padding: 0 8px 0 7px; }
    .hthumb { width: 547px; height: 15px; margin-left: 7px; border: 1px solid #8e8e8e; border-radius: 2px; background: linear-gradient(#f6f6f6 0, #e4e4e6 6px, #c9cacd 7px, #d2d2d5 100%); display: flex; align-items: center; justify-content: center; }
    .hthumb i { width: 8px; height: 7px; background: repeating-linear-gradient(90deg, #3a3a3a 0 1px, #aaa 1px 2px, transparent 2px 3px); }
    .hbar .rt { margin-left: auto; }
    .endbar { width: 3px; height: 17px; background: #000; margin-right: 14px; }

    .status { flex: 1; display: flex; border-top: 1px solid #fff; }
    .status > div { height: 16px; margin-top: 3px; padding-top: 2px; display: flex; align-items: center; line-height: 16px; border-left: 1px solid #8f8f8f; box-shadow: -1px 0 #fff; }
    .status > div.a { width: 528px; border: 0; padding-left: 7px; box-shadow: none; }
    .status .b { width: 510px; padding-left: 5px; }
    .status .c1 { width: 54px; }
    .status .c2 { width: 34px; padding-left: 4px; }
    .status .c3 { width: 16px; }
    .status .c4 { width: 29px; }
    .status .d { width: 556px; padding-left: 237px; }
    .status .e { width: 153px; padding-left: 4px; }
    .status .f { padding-left: 3px; flex: 1; }
  `;

  private cell(v: string, c: number) {
    const cls = c === 19 ? "c total" : isLoss(v, c) ? "c loss" : "c";
    return html`<div class=${cls}>${v}</div>`;
  }

  private row(n: number) {
    const data = n > 1 && n <= 15 ? DATA[n - 2] : null;
    const sel = n >= 13 && n <= 15;
    const cls = "r" + (n > 15 ? " small" : "") + (sel ? " sel" : "") + (n === 12 || n === 15 ? " edge" : "");
    return html`<div class=${cls}>
      <div class="n">${n}</div>
      ${letters.map((_, c) =>
        n === 1 && c < 20
          ? html`<div class="c head"><fit-text w=${HEAD_W[c]}>${HEADS[c]}</fit-text></div>`
          : data && c < 20 ? this.cell(data[c], c) : html`<div class="c"></div>`)}
      ${n === 13 ? html`<i class="cursor"></i>` : nothing}
    </div>`;
  }

  render() {
    const navs = ["M2.500 2v8M9 2v8L4.500 6z", "M8 2v8L3.500 6z", "M4 2v8l4.500-4z", "M3 2v8l4.500-4zM9.500 2v8"];
    return html`
      <div class="title">
        <svg class="logo" viewBox="0 0 15 16"><path d="M1.500.5h11v14h-11z" fill="#eef2e8" stroke="#4f5b62"/><path d="M0 1l4 1 3 2 4-2 3 1v2l-4 1-4-2-6 1z" fill="#202b33"/><path d="M4.500 6.500h8v7h-8z" fill="#fff" stroke="#7fa818" stroke-width="1.400"/><path d="M4.500 10h8M8.500 6.500v7" stroke="#7fa818" stroke-width="1.300"/></svg>
        <fit-text class="caption" w="305">Trading Journal - Trades Taken.ods - OpenOffice.org Calc</fit-text>
        <div class="winbtns">
          <span><svg width="14" height="15"><rect x="2" y="5.500" width="11" height="4" fill="#f2f2f2" stroke="#55565e"/></svg></span>
          <span><svg width="14" height="15"><path d="M4.500-1h6v8h-2" fill="none" stroke="#e6e6ea" stroke-width="1.500"/><rect x="2" y="2" width="6.500" height="6.500" fill="#333" stroke="#f0f0f2" stroke-width="2"/></svg></span>
          <span class="wide"><svg width="14" height="15"><path d="M3.500.5l7 8M10.500.5l-7 8" stroke="#f0f0f0" stroke-width="2.600"/></svg></span>
        </div>
      </div>
      <div class="menu">
        ${MENUS.map(([a, k, b, w]) => html`<fit-text w=${w}>${a}<b>${k}</b>${b}</fit-text>`)}
        <svg width="9" height="9" viewBox="0 0 9 9"><path d="M1 1l7 7M8 1L1 8" stroke="#4f5a6c" stroke-width="1.700"/></svg>
      </div>
      <div class="bars">
        <div class="row1">
          <div class="bar main"><i class="grip"></i>${tool("new")}<i class="drop first"></i>${BAR1.slice(2).map(tool)}<i class="more"></i></div>
          <div class="bar search">
            <i class="grip"></i>
            <div class="combo find"><fit-text w="23">Find</fit-text><i class="btn"></i></div>
            ${tool("down")}${tool("up")}<i class="more"></i>
          </div>
        </div>
        <div class="row2">
          <div class="bar">
            <i class="grip"></i>${tool("styles")}
            <div class="combo font"><fit-text w="24">Arial</fit-text><i class="btn"></i></div>
            <div class="combo size"><fit-text w="13">10</fit-text><i class="btn"></i></div>
            ${BAR2.map(tool)}<i class="more"></i>
          </div>
        </div>
      </div>
      <div class="formula">
        <div class="combo name"><fit-text w="58">A13:AMJ15</fit-text><i class="btn"></i></div>
        ${tool("fx")}${tool("sum")}${tool("equal")}
        <div class="input"><fit-text w="59">12/10/2012</fit-text></div>
      </div>
      <div class="work">
        <div class="sheet">
          <div class="r top"><div class="n"></div>${letters.map((l) => html`<div class="l">${l}</div>`)}</div>
          ${Array.from({ length: 52 }, (_, i) => this.row(i + 1))}
        </div>
        <div class="vbar"><i class="arr u"></i><div class="vthumb"><i class="gripv"></i></div><i class="arr d"></i></div>
      </div>
      <div class="foot">
        <div class="nav">${navs.map((d) => html`<span><svg width="12" height="12"><path d=${d} fill="#000" stroke="#000" stroke-width="1.200"/></svg></span>`)}</div>
        <div class="tabs">
          <svg width="645" height="17"><path d="M.5.5h95l4 15.500H7.500z" fill="#efefef" stroke="#555"/><path d="M95.500.5l6 15.500h153.500l9-15.500" fill="#fff"/><path d="M95.500.5l6 15.500H255.500L264 .5h381" fill="none" stroke="#555"/></svg>
          <div class="names"><fit-text w="82">Trading Journal</fit-text><b><fit-text w="152">11.27.2012 Revised Journal</fit-text></b></div>
        </div>
        <i class="splitter"></i>
        <div class="hbar"><i class="arr lf"></i><div class="hthumb"><i></i></div><i class="arr rt"></i></div>
        <i class="endbar"></i>
      </div>
      <div class="status">
        <div class="a"><fit-text w="55">Sheet 2 / 2</fit-text></div>
        <div class="b"><fit-text w="39">Default</fit-text></div>
        <div class="c1"></div>
        <div class="c2"><fit-text w="21">STD</fit-text></div>
        <div class="c3"></div><div class="c4"></div>
        <div class="d"><fit-text w="78">Sum=05/19/32</fit-text></div>
        <div class="e">
          <svg width="146" height="16" viewBox="0 0 146 16">
            <path d="M17.500 10.500v-3H125" fill="none" stroke="#7c7c7c"/>
            <g fill="#cfe6f7" stroke="#5d7282"><circle cx="6.500" cy="8" r="5"/><circle cx="134.500" cy="8" r="5"/></g>
            <path d="M3.500 8h6M131.500 8h6M134.500 5v6" stroke="#1c3f66" stroke-width="1.400"/>
            <circle cx="66" cy="8.500" r="3.500" fill="#5c92bb" stroke="#24465f"/><path d="M69.500 2.500v7" stroke="#444"/>
          </svg>
        </div>
        <div class="f"><fit-text w="24">95%</fit-text></div>
      </div>
    `;
  }
}
